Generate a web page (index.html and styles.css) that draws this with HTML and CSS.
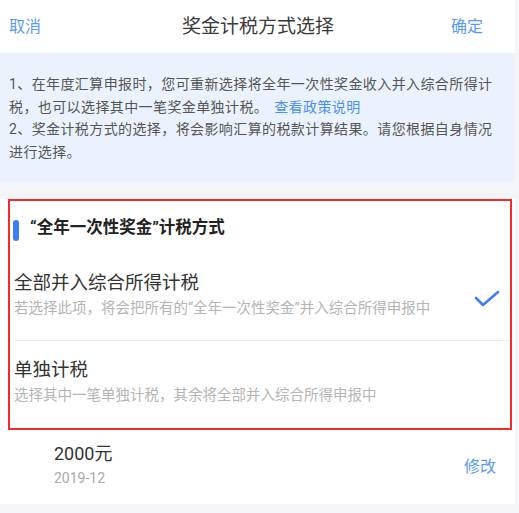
FILE: index.html
```html
<!DOCTYPE html>
<html lang="zh-CN">
<head>
    <meta charset='utf-8'>
    <title>奖金计税方式选择</title>
    <link rel="stylesheet" href="styles.css">
</head>
<body>
    <div class="div-page">

        <div class="div-header">
            <a class="a-action" href="#">取消</a>
            <span class="span-title">奖金计税方式选择</span>
            <a class="a-action" href="#">确定</a>
        </div>

        <div class="div-notice">
            <p>1、在年度汇算申报时，您可重新选择将全年一次性奖金收入并入综合所得计税，也可以选择其中一笔奖金单独计税。<a href="#">查看政策说明</a></p>
            <p>2、奖金计税方式的选择，将会影响汇算的税款计算结果。请您根据自身情况进行选择。</p>
        </div>

        <div class="div-card">
            <div class="div-choice">
                <div class="div-choice-title">
                    <span class="span-bar"></span>
                    <span>“全年一次性奖金”计税方式</span>
                </div>

                <div class="div-option">
                    <div class="div-option-text">
                        <div class="div-option-name">全部并入综合所得计税</div>
                        <div class="div-option-desc">若选择此项，将会把所有的“全年一次性奖金”并入综合所得申报中</div>
                    </div>
                    <svg class="svg-check" width="26" height="18" viewBox="0 0 26 18">
                        <polyline points="2,8 9,15 24,2" fill="none" stroke="#3f7ff0" stroke-width="2.6" stroke-linecap="round" stroke-linejoin="round"/>
                    </svg>
                </div>

                <div class="div-option">
                    <div class="div-option-text">
                        <div class="div-option-name">单独计税</div>
                        <div class="div-option-desc">选择其中一笔单独计税，其余将全部并入综合所得申报中</div>
                    </div>
                </div>
            </div>

            <div class="div-bonus">
                <div class="div-bonus-info">
                    <div class="div-bonus-amount">2000元</div>
                    <div class="div-bonus-date">2019-12</div>
                </div>
                <a class="a-edit" href="#">修改</a>
            </div>
        </div>

    </div>
</body>
</html>
```

FILE: styles.css
```css
/* reset */
body {
    margin: 0;
    padding: 0;
    background-color: #f4f5f8;
    font-family: Roboto, "Noto Sans CJK SC", sans-serif;
    color: #333;
}

a {
    text-decoration: none;
}

p {
    margin: 0;
}

/* layout */
.div-page {
    width: 515px;
}

.div-header {
    box-sizing: border-box;
    height: 54px;
    padding: 0 32px 4px 9px;
    background-color: white;
    border-bottom: 1px solid #eef0f4;
    display: flex;
    justify-content: space-between;
    align-items: center;
}

.a-action {
    color: #5b9bee;
    font-size: 16px;
}

.span-title {
    font-size: 19px;
    color: #3a3a3a;
    margin-left: 24px;
}

.div-notice {
    background-color: #eaf3fd;
    padding: 19px 14px 19px 9px;
    font-size: 14px;
    letter-spacing: 0.4px;
    line-height: 22.5px;
    color: #555;
}

.div-notice a {
    display: inline-block;
    color: #4a8ef0;
    margin-left: 6px;
}

.div-card {
    margin-top: 17px;
    background-color: white;
}

/* choice */
.div-choice {
    margin: 0 3px 0 8px;
    border: 2px solid #f02b2b;
    padding-left: 4px;
}

.div-choice-title {
    display: flex;
    align-items: center;
    padding-top: 13px;
    margin-bottom: 15px;
    font-size: 16.5px;
    font-weight: bold;
    line-height: 22px;
    color: #222;
}

.span-bar {
    width: 6px;
    height: 21px;
    margin: 6px 11px 0 -1px;
    border-radius: 3px;
    background-color: #3d7ef5;
}

.div-option {
    display: flex;
    align-items: center;
    padding: 14px 0 21px;
    border-bottom: 1px solid #ececec;
}

.div-option:last-child {
    border-bottom: none;
    padding: 16px 0 22px;
}

.div-option-text {
    flex-grow: 1;
}

.div-option-name {
    font-size: 18.5px;
    line-height: 26px;
    color: #333;
}

.div-option-desc {
    margin-top: 3px;
    font-size: 14.5px;
    line-height: 20px;
    color: #b4b4b4;
}

.svg-check {
    margin: 8px 10px 0 0;
}

/* bonus row */
.div-bonus {
    display: flex;
    justify-content: space-between;
    align-items: center;
    padding: 12px 19px 16px 54px;
}

.div-bonus-amount {
    font-size: 18px;
    line-height: 24px;
    color: #333;
}

.div-bonus-date {
    margin-top: 2px;
    font-size: 14px;
    line-height: 20px;
    color: #aaa;
}

.a-edit {
    color: #5b9bee;
    font-size: 16px;
}
```
